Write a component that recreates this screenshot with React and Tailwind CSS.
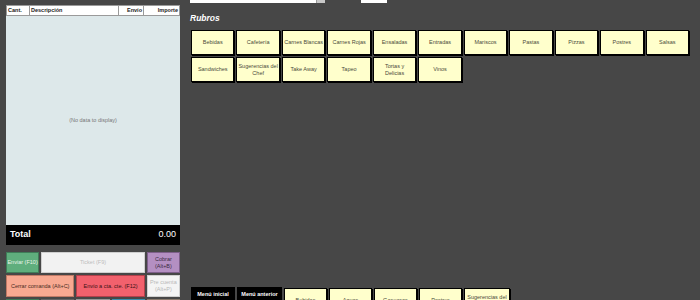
import React from "react";

const font = { fontFamily: '"Liberation Sans", "DejaVu Sans", sans-serif' };

const rubros1 = ["Bebidas", "Cafetería", "Carnes Blancas", "Carnes Rojas", "Ensaladas", "Entradas", "Mariscos", "Pastas", "Pizzas", "Postres", "Salsas"];
const rubros2 = ["Sandwiches", "Sugerencias del Chef", "Take Away", "Tapeo", "Tortas y Delicias", "Vinos"];
const bottomItems = ["Bebidas", "Aguas", "Gaseosas", "Postres", "Sugerencias del Chef"];

function Rubro({ label }) {
  return (
    <div className="h-[25px] bg-[#ffffcc] border border-black shadow-[1px_1px_0_#000] flex items-center justify-center text-center leading-[7px] text-[5.5px] text-[#4a4a3a] px-[1px]">
      {label}
    </div>
  );
}

export default function App() {
  return (
    <div className="w-[700px] h-[300px] overflow-hidden bg-[#474747] flex" style={font}>
      {/* Left panel */}
      <div className="ml-[6px] w-[174px] flex flex-col pt-[5px] shrink-0">
        <div className="shrink-0 h-[11px] bg-white border border-[#9a9a9a] flex text-[5.5px] font-bold text-[#222] leading-none">
          <div className="w-[23px] border-r border-[#9a9a9a] flex items-center pl-[1px]">Cant.</div>
          <div className="w-[89px] border-r border-[#9a9a9a] flex items-center pl-[1px]">Descripción</div>
          <div className="w-[25px] border-r border-[#9a9a9a] flex items-center justify-end pr-[1px]">Envío</div>
          <div className="flex-1 flex items-center justify-end pr-[1px]">Importe</div>
        </div>
        <div className="shrink-0 h-[209px] bg-[#dde8ea] flex items-center justify-center text-[5.5px] text-[#777]">
          (No data to display)
        </div>
        <div className="shrink-0 h-[20px] bg-black flex items-center justify-between px-[4px] text-white text-[9px]">
          <span className="font-bold">Total</span>
          <span>0.00</span>
        </div>
        <div className="shrink-0 mt-[7px] grid grid-cols-5 gap-x-[2px] gap-y-[2px] text-[5.5px] leading-[7px] text-center">
          <div className="h-[21px] bg-[#5fae7d] border border-[#3f7d58] text-[#e8f4ea] flex items-center justify-center">Enviar (F10)</div>
          <div className="h-[21px] col-span-3 bg-[#f2f2f2] border border-[#cfcfcf] text-[#bdbdbd] flex items-center justify-center">Ticket (F9)</div>
          <div className="h-[21px] bg-[#b48fc2] border border-[#7e5f8a] text-[#3b2a42] flex items-center justify-center">Cobrar<br />(Alt+B)</div>
          <div className="h-[22px] col-span-2 bg-[#f8a991] border border-[#c07a66] text-[#4a2a22] flex items-center justify-center">Cerrar comanda (Alt+C)</div>
          <div className="h-[22px] col-span-2 bg-[#f2616d] border border-[#b2404a] text-[#3a1014] flex items-center justify-center">Envío a cta. cte. (F12)</div>
          <div className="h-[22px] bg-[#f4f4f4] border border-[#cfcfcf] text-[#b8b8b8] flex items-center justify-center">Pre cuenta<br />(Alt+P)</div>
          <div className="h-[22px] bg-[#5fae7d] border border-[#3f7d58]"></div>
          <div className="h-[22px] bg-[#8a8a8a] border border-[#666]"></div>
          <div className="h-[22px] bg-[#cfcfcf] border border-[#999]"></div>
          <div className="h-[22px] bg-[#5cc4ee] border border-[#3a8fb0]"></div>
          <div className="h-[22px] bg-[#bba99a] border border-[#8a7a6c]"></div>
        </div>
      </div>

      {/* Right panel */}
      <div className="ml-[10px] w-[500px] h-[313px] flex flex-col shrink-0">
        <div className="shrink-0 flex h-[3px] items-end">
          <div className="w-[135px] h-[3px] bg-white flex justify-end">
            <div className="w-[9px] h-[3px] bg-[#c8c8c8] border-l border-[#999]"></div>
          </div>
          <div className="ml-[36px] w-[26px] h-[3px] bg-white"></div>
        </div>
        <div className="shrink-0 mt-[9px] h-[12px] text-white font-bold italic text-[8.5px] leading-[12px]">
          Rubros
        </div>
        <div className="shrink-0 mt-[6px] ml-[1px] w-[498px] grid grid-cols-11 gap-x-[2px] gap-y-[2px]">
          {rubros1.map((r) => <Rubro key={r} label={r} />)}
          {rubros2.map((r) => <Rubro key={r} label={r} />)}
        </div>
        <div className="shrink-0 mt-auto ml-[1px] flex items-start gap-[2px]">
          <div className="w-[44px] h-[26px] bg-black text-white text-[5.5px] font-bold flex justify-center pt-[3px]">Menú inicial</div>
          <div className="w-[45px] h-[26px] bg-black text-white text-[5.5px] font-bold flex justify-center pt-[3px]">Menú anterior</div>
          <div className="flex gap-[2px] mt-[1px]">
            {bottomItems.map((b, i) => (
              <div key={b} className={`${i === 4 ? "w-[46px]" : "w-[43px]"} h-[25px] bg-[#ffffcc] border border-black shadow-[1px_1px_0_#000] flex items-center justify-center text-center leading-[7px] text-[5.5px] text-[#4a4a3a] px-[1px]`}>
                {b}
              </div>
            ))}
          </div>
        </div>
      </div>
    </div>
  );
}
